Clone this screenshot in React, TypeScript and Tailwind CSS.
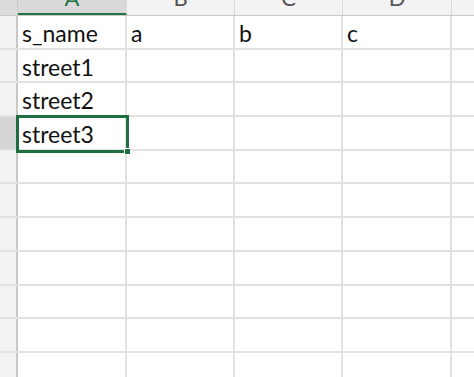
import React from "react";

const rowHeights = [34, 33, 34, 34, 33, 34, 34, 34, 33, 34, 34];
const data: string[][] = [
  ["s_name", "a", "b", "c"],
  ["street1", "", "", ""],
  ["street2", "", "", ""],
  ["street3", "", "", ""],
];
const colW = ["w-[109px]", "w-[108px]", "w-[108px]", "w-[109px]"];
const letters = ["A", "B", "C", "D"];

export default function App() {
  return (
    <div
      className="relative w-[474px] h-[377px] overflow-hidden bg-white"
      style={{ fontFamily: "Lato, 'Open Sans', sans-serif" }}
    >
      {/* header row */}
      <div className="flex h-[16px] border-b border-[#c9c9c9] bg-[#f3f3f3]">
        <div className="w-[18px] shrink-0 bg-[#dcdcdc] border-r border-[#c9c9c9]" />
        {letters.map((l, i) => (
          <div
            key={l}
            className={`${colW[i]} shrink-0 relative overflow-hidden border-r border-[#dadada] ${
              i === 0 ? "bg-[#d9d9d9] border-b-[2px] border-b-[#217346]" : ""
            }`}
          >
            <span
              className={`absolute left-0 right-0 text-center text-[22px] leading-none top-[-13px] ${
                i === 0 ? "text-[#217346]" : "text-[#555]"
              }`}
            >
              {l}
            </span>
          </div>
        ))}
        <div className="flex-1" />
      </div>
      {/* body rows */}
      {rowHeights.map((h, r) => (
        <div key={r} className="flex border-b-[2px] border-[#e2e2e2]" style={{ height: h }}>
          <div
            className={`w-[18px] shrink-0 border-r-[2px] border-[#c8c8c8] ${
              r === 3 ? "bg-[#d6d6d6]" : "bg-[#f3f3f3]"
            }`}
          />
          {letters.map((l, c) => (
            <div
              key={l}
              className={`${colW[c]} shrink-0 border-r-[2px] border-[#e2e2e2] flex items-center pl-[4px] pt-[3px] text-[23px] text-[#111] leading-none`}
            >
              {data[r]?.[c] ?? ""}
            </div>
          ))}
          <div className="flex-1" />
        </div>
      ))}
      {/* selection */}
      <div className="absolute left-[16px] top-[115px] w-[113px] h-[38px] border-[3px] border-[#1e6e42]" />
      <div className="absolute left-[124px] top-[148px] w-[7px] h-[7px] bg-[#1e6e42] border border-white" />
    </div>
  );
}
